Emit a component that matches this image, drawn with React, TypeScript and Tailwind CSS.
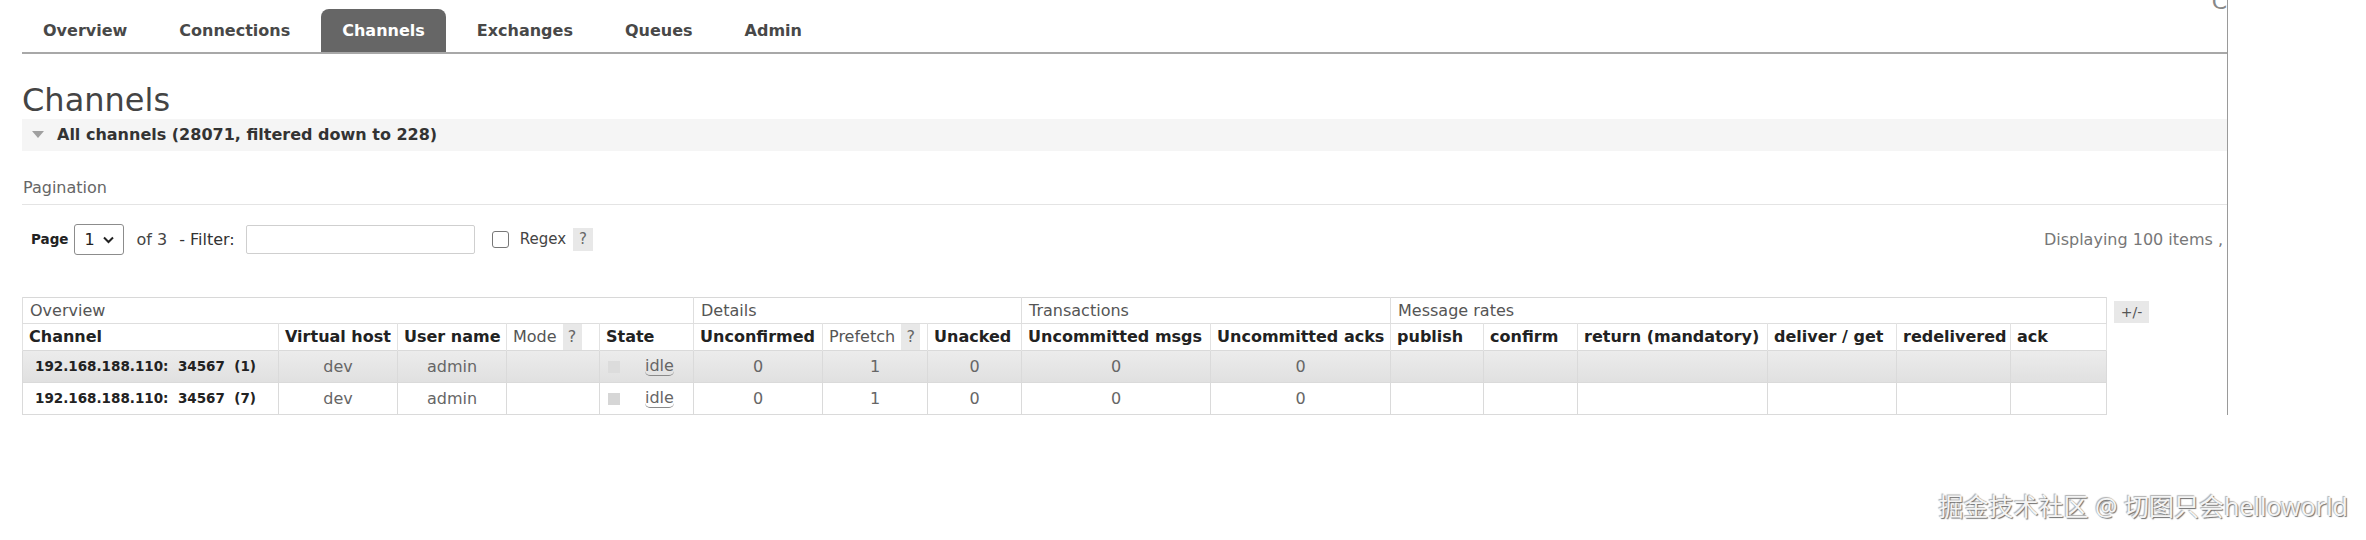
const tabs = ["Overview", "Connections", "Channels", "Exchanges", "Queues", "Admin"];

type Col = { label: string; w: string; help?: boolean };

const cols: Col[] = [
  { label: "Channel", w: "w-[256px]" },
  { label: "Virtual host", w: "w-[119px]" },
  { label: "User name", w: "w-[109px]" },
  { label: "Mode", w: "w-[93px]", help: true },
  { label: "State", w: "w-[94px]" },
  { label: "Unconfirmed", w: "w-[129px]" },
  { label: "Prefetch", w: "w-[105px]", help: true },
  { label: "Unacked", w: "w-[94px]" },
  { label: "Uncommitted msgs", w: "w-[189px]" },
  { label: "Uncommitted acks", w: "w-[180px]" },
  { label: "publish", w: "w-[93px]" },
  { label: "confirm", w: "w-[94px]" },
  { label: "return (mandatory)", w: "w-[190px]" },
  { label: "deliver / get", w: "w-[129px]" },
  { label: "redelivered", w: "w-[114px]" },
  { label: "ack", w: "w-[96px]" },
];

const groups = [
  { label: "Overview", span: 5 },
  { label: "Details", span: 3 },
  { label: "Transactions", span: 2 },
  { label: "Message rates", span: 6 },
];

const rows = [
  { name: "192.168.188.110:  34567  (1)", vhost: "dev", user: "admin", prefetch: "1" },
  { name: "192.168.188.110:  34567  (7)", vhost: "dev", user: "admin", prefetch: "1" },
];

function HeaderCell({ col }: { col: Col }) {
  if (col.help) {
    return (
      <th className="p-0 border-x border-[#e2e2e2] text-left font-normal">
        <div className="flex h-[26px] items-stretch">
          <span className="flex items-center pl-[6px] text-[#555]">{col.label}</span>
          <span className="ml-[6px] flex w-[19px] items-center justify-center bg-[#e8e8e8] text-[#666]">?</span>
        </div>
      </th>
    );
  }
  return (
    <th className="h-[26px] border-x border-[#e2e2e2] px-[6px] text-left font-bold text-[#222] whitespace-nowrap">
      {col.label}
    </th>
  );
}

export default function App() {
  return (
    <div className="relative h-[540px] w-[2366px] overflow-hidden bg-white font-['DejaVu_Sans',sans-serif] text-[16px]">
      <div className="relative h-[415px] w-[2228px] overflow-hidden border-r border-[#9a9a9a] pl-[22px]">
        <span className="absolute right-[0px] top-[-15px] text-[22px] text-[#888]">C</span>

        {/* nav tabs */}
        <div className="flex gap-[10px] border-b-2 border-[#a8a8a8] pt-[9px]">
          {tabs.map((t) => (
            <div
              key={t}
              className={`flex h-[43px] items-center rounded-t-[8px] px-[21px] font-bold ${
                t === "Channels" ? "bg-[#666666] text-white" : "text-[#484848]"
              }`}
            >
              {t}
            </div>
          ))}
        </div>

        <h1 className="mt-[28px] text-[32px] leading-[37px] font-normal text-[#444]">Channels</h1>

        <div className="flex h-[32px] items-center bg-[#f5f5f5]">
          <svg width="12" height="8" viewBox="0 0 12 8" className="ml-[10px]">
            <polygon points="0,0 12,0 6,7" fill="#a0a0a0" />
          </svg>
          <span className="ml-[13px] font-bold text-[#333]">All channels (28071, filtered down to 228)</span>
        </div>

        <div className="mt-[25px] border-b border-[#e4e4e4] pb-[4px] text-[#666]">
          <span className="ml-[1px]">Pagination</span>
        </div>

        <div className="mt-[19px] flex items-center">
          <span className="ml-[9px] text-[13.5px] font-bold text-[#222]">Page</span>
          <div className="ml-[6px] flex h-[31px] w-[50px] items-center gap-[8px] rounded-[3px] border border-[#8c8c8c] pl-[9px]">
            <span className="text-[#222]">1</span>
            <svg width="11" height="8" viewBox="0 0 11 8">
              <polyline points="1,1.5 5.5,6 10,1.5" fill="none" stroke="#222" strokeWidth="2" />
            </svg>
          </div>
          <span className="ml-[12px] text-[#444]">of 3</span>
          <span className="ml-[12px] text-[#333]">- Filter:</span>
          <div className="ml-[11px] h-[29px] w-[229px] rounded-[2px] border border-[#cfcfcf]" />
          <div className="ml-[17px] h-[17px] w-[17px] rounded-[3px] border border-[#777]" />
          <span className="ml-[11px] text-[15px] text-[#444]">Regex</span>
          <span className="ml-[7px] flex h-[23px] w-[20px] items-center justify-center bg-[#e8e8e8] text-[15px] text-[#666]">?</span>
          <span className="ml-auto pr-[4px] text-[#777]">Displaying 100 items ,</span>
        </div>

        <div className="mt-[42px] flex items-start gap-[7px]">
          <table className="w-[2085px] table-fixed border-collapse border border-[#d8d8d8]">
            <colgroup>
              {cols.map((c) => (
                <col key={c.label} className={c.w} />
              ))}
            </colgroup>
            <thead>
              <tr className="border-b border-[#dedede]">
                {groups.map((g) => (
                  <th
                    key={g.label}
                    colSpan={g.span}
                    className="h-[26px] border-x border-[#dedede] px-[7px] text-left font-normal text-[#555]"
                  >
                    {g.label}
                  </th>
                ))}
              </tr>
              <tr>
                {cols.map((c) => (
                  <HeaderCell key={c.label} col={c} />
                ))}
              </tr>
            </thead>
            <tbody>
              {rows.map((r, i) => {
                const cell = "h-[32px] border border-[#dadada] text-center text-[#666]";
                return (
                  <tr
                    key={r.name}
                    className={i === 0 ? "bg-linear-to-b from-[#ececec] to-[#e0e0e0]" : "bg-white"}
                  >
                    <td className="h-[32px] border border-[#dadada] pl-[12px] text-[13.5px] font-bold whitespace-pre text-[#222]">
                      {r.name}
                    </td>
                    <td className={cell}>{r.vhost}</td>
                    <td className={cell}>{r.user}</td>
                    <td className={cell}></td>
                    <td className="h-[32px] border border-[#dadada] text-[#666]">
                      <div className="flex items-center pl-[8px]">
                        <span className={`h-[12px] w-[12px] ${i === 0 ? "bg-[#dcdcdc]" : "bg-[#d6d6d6]"}`} />
                        <span className="ml-[25px] rounded-[5px] border-b border-[#8a8a8a] leading-[18px]">idle</span>
                      </div>
                    </td>
                    <td className={cell}>0</td>
                    <td className={cell}>{r.prefetch}</td>
                    <td className={cell}>0</td>
                    <td className={cell}>0</td>
                    <td className={cell}>0</td>
                    <td className={cell}></td>
                    <td className={cell}></td>
                    <td className={cell}></td>
                    <td className={cell}></td>
                    <td className={cell}></td>
                    <td className={cell}></td>
                  </tr>
                );
              })}
            </tbody>
          </table>
          <span className="mt-[4px] flex h-[22px] w-[35px] items-center justify-center bg-[#e8e8e8] text-[14px] text-[#555]">
            +/-
          </span>
        </div>
      </div>

      <div className="absolute right-[18px] bottom-[19px] font-['Noto_Sans','Noto_Sans_CJK_SC',sans-serif] text-[25px] leading-[30px] text-[#f4f4f4] [text-shadow:1px_1px_1px_#6f6f6f,-1px_-1px_1px_#b0b0b0]">
        掘金技术社区 @ 切图只会helloworld
      </div>
    </div>
  );
}
